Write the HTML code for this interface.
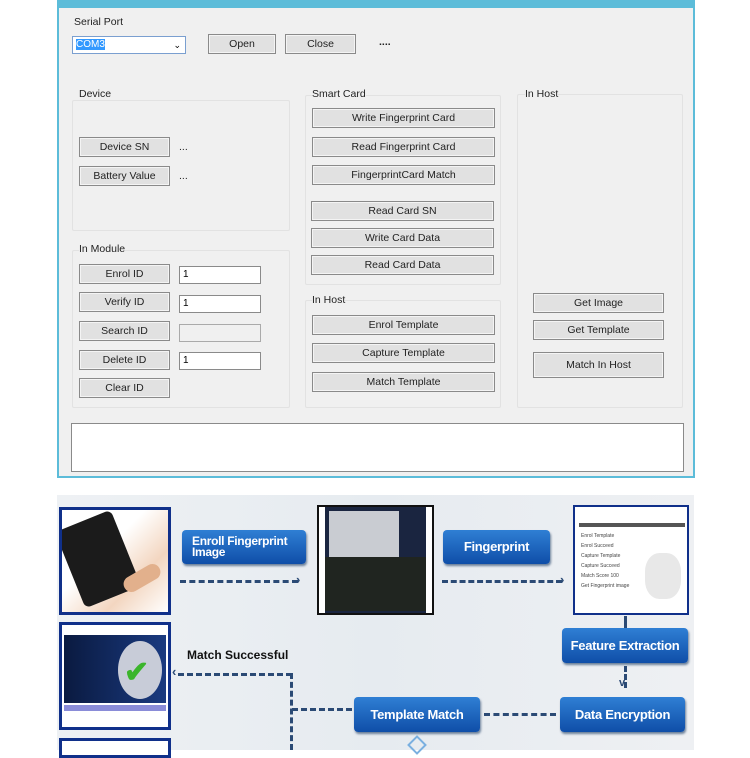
<!DOCTYPE html>
<html><head><meta charset="utf-8"><style>
*{margin:0;padding:0;box-sizing:border-box}
body{width:750px;height:750px;background:#fff;position:relative;overflow:hidden;font-family:"Liberation Sans",sans-serif}
.a{position:absolute}
.win{left:57px;top:0;width:638px;height:478px;background:#f0f0f0;border:2px solid #5cbcd9;border-top:8px solid #5cbcd9}
.t{position:absolute;font-size:10.5px;color:#222}
.btn{position:absolute;background:#e1e1e1;border:1px solid #8a8a8a;box-shadow:inset 0 0 0 1px #f4f4f4;font-size:10.5px;color:#222;text-align:center}
.grp{position:absolute;border:1px solid #e2e2e2;border-radius:2px}
.inp{position:absolute;background:#fff;border:1px solid #8a8a8a;font-size:10px;padding-left:3px;line-height:16px}
.bb{position:absolute;background:linear-gradient(#2f7fd4,#0f4ea8);border-radius:4px;color:#fff;font-weight:bold;font-size:13px;box-shadow:1px 2px 2px #6a7f99;display:flex;align-items:center;justify-content:center;line-height:12px;letter-spacing:-0.3px}
.ph{position:absolute;border:3px solid #10308a;background:#fff}
.dh{position:absolute;border-top:3px dashed #2b4a75;height:0}
.dv{position:absolute;border-left:3px dashed #2b4a75;width:0}
</style></head><body>
<div class="a win"></div>
<div class="t" style="left:74px;top:16px">Serial Port</div>
<div class="inp" style="left:72px;top:36px;width:114px;height:18px;border-color:#7a9fd0"><span style="background:#3399ff;color:#fff">COM3</span><span style="position:absolute;right:4px;top:0;font-size:9px">⌄</span></div>
<div class="btn" style="left:208px;top:34px;width:68px;height:20px;line-height:18px">Open</div>
<div class="btn" style="left:285px;top:34px;width:71px;height:20px;line-height:18px">Close</div>
<div class="t" style="left:379px;top:36px;font-weight:bold">....</div>

<div class="grp" style="left:72px;top:100px;width:218px;height:131px"></div>
<div class="t" style="left:79px;top:88px;background:#f0f0f0">Device</div>
<div class="btn" style="left:79px;top:137px;width:91px;height:20px;line-height:18px">Device SN</div>
<div class="t" style="left:179px;top:141px">...</div>
<div class="btn" style="left:79px;top:166px;width:91px;height:20px;line-height:18px">Battery Value</div>
<div class="t" style="left:179px;top:170px">...</div>

<div class="grp" style="left:72px;top:250px;width:218px;height:158px"></div>
<div class="t" style="left:79px;top:243px;background:#f0f0f0">In Module</div>
<div class="btn" style="left:79px;top:264px;width:91px;height:20px;line-height:18px">Enrol ID</div>
<div class="inp" style="left:179px;top:266px;width:82px;height:18px">1</div>
<div class="btn" style="left:79px;top:292px;width:91px;height:20px;line-height:18px">Verify ID</div>
<div class="inp" style="left:179px;top:295px;width:82px;height:18px">1</div>
<div class="btn" style="left:79px;top:321px;width:91px;height:20px;line-height:18px">Search ID</div>
<div class="inp" style="left:179px;top:324px;width:82px;height:18px;background:#f0f0f0;border-color:#aaa"></div>
<div class="btn" style="left:79px;top:350px;width:91px;height:20px;line-height:18px">Delete ID</div>
<div class="inp" style="left:179px;top:352px;width:82px;height:18px">1</div>
<div class="btn" style="left:79px;top:378px;width:91px;height:20px;line-height:18px">Clear ID</div>

<div class="grp" style="left:305px;top:95px;width:196px;height:190px"></div>
<div class="t" style="left:312px;top:88px;background:#f0f0f0">Smart Card</div>
<div class="btn" style="left:312px;top:108px;width:183px;height:20px;line-height:18px">Write Fingerprint Card</div>
<div class="btn" style="left:312px;top:137px;width:183px;height:20px;line-height:18px">Read Fingerprint Card</div>
<div class="btn" style="left:312px;top:165px;width:183px;height:20px;line-height:18px">FingerprintCard Match</div>
<div class="btn" style="left:311px;top:201px;width:183px;height:20px;line-height:18px">Read Card SN</div>
<div class="btn" style="left:311px;top:228px;width:183px;height:20px;line-height:18px">Write Card Data</div>
<div class="btn" style="left:311px;top:255px;width:183px;height:20px;line-height:18px">Read Card Data</div>

<div class="grp" style="left:305px;top:300px;width:196px;height:108px"></div>
<div class="t" style="left:312px;top:294px;background:#f0f0f0">In Host</div>
<div class="btn" style="left:312px;top:315px;width:183px;height:20px;line-height:18px">Enrol Template</div>
<div class="btn" style="left:312px;top:343px;width:183px;height:20px;line-height:18px">Capture Template</div>
<div class="btn" style="left:312px;top:372px;width:183px;height:20px;line-height:18px">Match Template</div>

<div class="grp" style="left:517px;top:94px;width:166px;height:314px"></div>
<div class="t" style="left:525px;top:88px;background:#f0f0f0">In Host</div>
<div class="btn" style="left:533px;top:293px;width:131px;height:20px;line-height:18px">Get Image</div>
<div class="btn" style="left:533px;top:320px;width:131px;height:20px;line-height:18px">Get Template</div>
<div class="btn" style="left:533px;top:352px;width:131px;height:26px;line-height:24px">Match In Host</div>

<div class="a" style="left:71px;top:423px;width:613px;height:49px;background:#fff;border:1px solid #8a8a8a"></div>

<div class="a" style="left:57px;top:495px;width:637px;height:255px;background:linear-gradient(90deg,#eef1f4,#e6ebf0 50%,#eef0f3)"></div>
<div class="ph" style="left:59px;top:507px;width:112px;height:108px;background:linear-gradient(135deg,#fff 0,#fff 40%,#f3d6c0 70%,#fff 100%);overflow:hidden">
 <div class="a" style="left:6px;top:8px;width:60px;height:82px;background:#1b1b1b;border-radius:6px;transform:rotate(-22deg)"></div>
 <div class="a" style="left:60px;top:60px;width:40px;height:16px;background:#e2b08c;border-radius:8px;transform:rotate(-30deg)"></div>
</div>
<div class="bb" style="left:182px;top:530px;width:124px;height:34px;justify-content:flex-start;padding-left:10px;text-align:left;font-size:12px;line-height:11px">Enroll Fingerprint<br>Image</div>
<div class="dh" style="left:180px;top:580px;width:118px"></div>
<div class="t" style="left:296px;top:572px;color:#2b4a75;font-weight:bold;font-size:13px">›</div>
<div class="ph" style="left:317px;top:505px;width:117px;height:110px;border:2px solid #111;background:#1a2540">
 <div class="a" style="left:10px;top:4px;width:70px;height:50px;background:#c9ccd2"></div>
 <div class="a" style="left:2px;top:50px;width:110px;height:54px;background:#202520"></div>
 <div class="a" style="left:0;top:0;width:6px;height:106px;background:#fff"></div>
 <div class="a" style="right:0;top:0;width:6px;height:106px;background:#fff"></div>
</div>
<div class="bb" style="left:443px;top:530px;width:107px;height:34px">Fingerprint</div>
<div class="dh" style="left:442px;top:580px;width:120px"></div>
<div class="t" style="left:560px;top:572px;color:#2b4a75;font-weight:bold;font-size:13px">›</div>
<div class="ph" style="left:573px;top:505px;width:116px;height:110px;border:2px solid #10308a">
 <div class="a" style="left:4px;top:16px;width:106px;height:4px;background:#555"></div>
 <div class="a" style="left:6px;top:24px;font-size:5px;color:#444;line-height:10px">Enrol Template<br>Enrol Succeed<br>Capture Template<br>Capture Succeed<br>Match Score 100<br>Get Fingerprint image</div>
 <div class="a" style="left:70px;top:46px;width:36px;height:46px;background:#e8e8e8;border-radius:40%"></div>
</div>
<div class="dv" style="left:624px;top:616px;height:12px"></div>
<div class="bb" style="left:562px;top:628px;width:126px;height:35px">Feature Extraction</div>
<div class="dv" style="left:624px;top:666px;height:22px"></div>
<div class="t" style="left:619px;top:677px;color:#2b4a75;font-weight:bold;font-size:11px">v</div>
<div class="bb" style="left:560px;top:697px;width:125px;height:35px">Data Encryption</div>
<div class="dh" style="left:484px;top:713px;width:72px"></div>
<div class="bb" style="left:354px;top:697px;width:126px;height:35px">Template Match</div>
<div class="dh" style="left:292px;top:708px;width:60px"></div>
<div class="dv" style="left:290px;top:673px;height:77px"></div>
<div class="dh" style="left:178px;top:673px;width:114px"></div>
<div class="t" style="left:172px;top:664px;color:#2b4a75;font-weight:bold;font-size:13px">‹</div>
<div class="t" style="left:187px;top:648px;font-weight:bold;font-size:12px;color:#111">Match Successful</div>
<div class="ph" style="left:59px;top:622px;width:112px;height:108px">
 <div class="a" style="left:2px;top:10px;width:102px;height:68px;background:linear-gradient(90deg,#0a1a40,#1a3a80)"></div>
 <div class="a" style="left:56px;top:16px;width:44px;height:58px;border-radius:50%;background:#c8ccd8"></div>
 <div class="a" style="left:62px;top:30px;color:#3bb52c;font-size:30px;font-weight:bold">✔</div>
 <div class="a" style="left:2px;top:80px;width:102px;height:6px;background:#8a8cd8"></div>
</div>
<div class="ph" style="left:59px;top:738px;width:112px;height:20px"></div>
<div class="a" style="left:410px;top:738px;width:14px;height:14px;border:2px solid #7ab0e0;transform:rotate(45deg)"></div>
</body></html>
